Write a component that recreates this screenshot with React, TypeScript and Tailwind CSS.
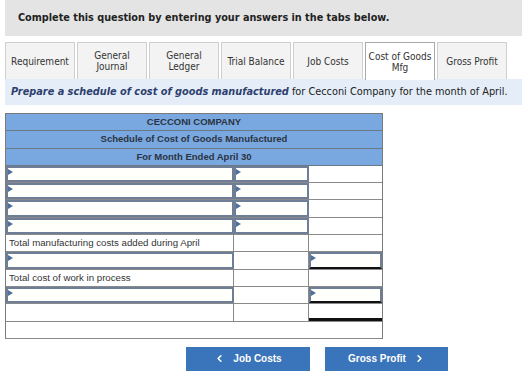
import React from "react";
import { ChevronLeft, ChevronRight } from "lucide-react";

const verdana = { fontFamily: '"DejaVu Sans", Verdana, sans-serif' };
const tahoma = { fontFamily: '"DejaVu Sans Condensed", "DejaVu Sans", Tahoma, sans-serif' };
const arial = { fontFamily: '"Liberation Sans", Arial, sans-serif' };

function Arrow() {
  return (
    <span className="absolute left-0 top-[1px] w-0 h-0 border-y-[3px] border-y-transparent border-l-[5px] border-l-[#4f6f9f]" />
  );
}

function InputCell({ w, black }: { w?: string; black?: "thin" | "thick" }) {
  return (
    <div className={`relative h-full ${w ?? "flex-1"} bg-[#fffffb] border-2 border-[#6e7e96] ${black === "thin" ? "border-b-[#111]" : ""}`}>
      <Arrow />
    </div>
  );
}

function PlainCell({ w, children, black, last }: { w?: string; children?: React.ReactNode; black?: "thin" | "thick"; last?: boolean }) {
  return (
    <div
      className={`relative h-full ${w ?? "flex-1"} ${last ? "" : "border-r border-r-[#8a8a8a]"} bg-white flex items-center pl-[3px] text-[9.7px] text-[#333] whitespace-nowrap ${
        black === "thick" ? "border-b-[3px] border-b-[#111]" : black === "thin" ? "border-b-2 border-b-[#111]" : ""
      }`}
    >
      {children}
    </div>
  );
}

export default function App() {
  const tabs = [
    ["Requirement"],
    ["General", "Journal"],
    ["General", "Ledger"],
    ["Trial Balance"],
    ["Job Costs"],
    ["Cost of Goods", "Mfg"],
    ["Gross Profit"],
  ];
  const row = "h-[17.3px] flex border-b border-b-[#8a8a8a]";
  return (
    <div className="w-[522px] h-[386px] bg-white pl-[5px] overflow-hidden">
      <div className="h-[36px] bg-[#e4e4e4] flex items-center pl-[13px]">
        <span className="text-[9.7px] font-bold text-[#222] whitespace-nowrap" style={verdana}>
          Complete this question by entering your answers in the tabs below.
        </span>
      </div>
      <div className="mt-[6px] flex gap-[2px] h-[37px]">
        {tabs.map((t, i) => {
          const active = i === 5;
          return (
            <div
              key={i}
              className={`w-[70px] flex flex-col items-center justify-center text-[10px] leading-[11px] text-[#333] ${
                active
                  ? "bg-white border border-[#a9a9a9] border-b-0 relative z-10 h-[38px]"
                  : "bg-[#f3f3f3] border border-[#cfcfcf] border-b-0"
              }`}
              style={tahoma}
            >
              {t.map((l, j) => (
                <span key={j}>{l}</span>
              ))}
            </div>
          );
        })}
      </div>
      <div className="h-[26px] bg-[#e5eef8] flex items-center pl-[6px] text-[9.75px] text-[#222] whitespace-nowrap" style={verdana}>
        <span className="font-bold italic text-[#2d3f6e]">Prepare a schedule of cost of goods manufactured</span>
        <span>&nbsp;for Cecconi Company for the month of April.</span>
      </div>

      <div className="mt-[8px] w-[378px] border border-[#7a7a7a] border-b-0" style={arial}>
        {["CECCONI COMPANY", "Schedule of Cost of Goods Manufactured", "For Month Ended April 30"].map((h, i) => (
          <div
            key={i}
            className="h-[17.3px] bg-[#79a8e1] flex items-center justify-center text-[9.5px] font-bold text-[#2b3340] border-b border-b-[#6a7888]"
          >
            {h}
          </div>
        ))}
        {[0, 1, 2, 3].map((i) => (
          <div key={i} className={row}>
            <InputCell w="w-[228px]" />
            <InputCell w="w-[75px]" />
            <PlainCell last />
          </div>
        ))}
        <div className={row}>
          <PlainCell w="w-[228px]">Total manufacturing costs added during April</PlainCell>
          <PlainCell w="w-[75px]" />
          <PlainCell last />
        </div>
        <div className={row}>
          <InputCell w="w-[228px]" />
          <PlainCell w="w-[75px]" />
          <InputCell black="thin" />
        </div>
        <div className={row}>
          <PlainCell w="w-[228px]">Total cost of work in process</PlainCell>
          <PlainCell w="w-[75px]" />
          <PlainCell last />
        </div>
        <div className={row}>
          <InputCell w="w-[228px]" />
          <PlainCell w="w-[75px]" />
          <InputCell black="thin" />
        </div>
        <div className={row}>
          <PlainCell w="w-[228px]" />
          <PlainCell w="w-[75px]" />
          <PlainCell last black="thick" />
        </div>
        <div className={row} />
      </div>

      <div className="mt-[8px] flex gap-[15px] pl-[181px]" style={arial}>
        <div className="w-[124px] h-[24px] bg-[#3a74ba] flex items-center justify-center gap-[8px] text-white text-[10px] font-bold">
          <ChevronLeft size={11} strokeWidth={3.5} />
          <span>Job Costs</span>
        </div>
        <div className="w-[123px] h-[24px] bg-[#3a74ba] flex items-center justify-center gap-[8px] text-white text-[10px] font-bold">
          <span>Gross Profit</span>
          <ChevronRight size={11} strokeWidth={3.5} />
        </div>
      </div>
    </div>
  );
}
